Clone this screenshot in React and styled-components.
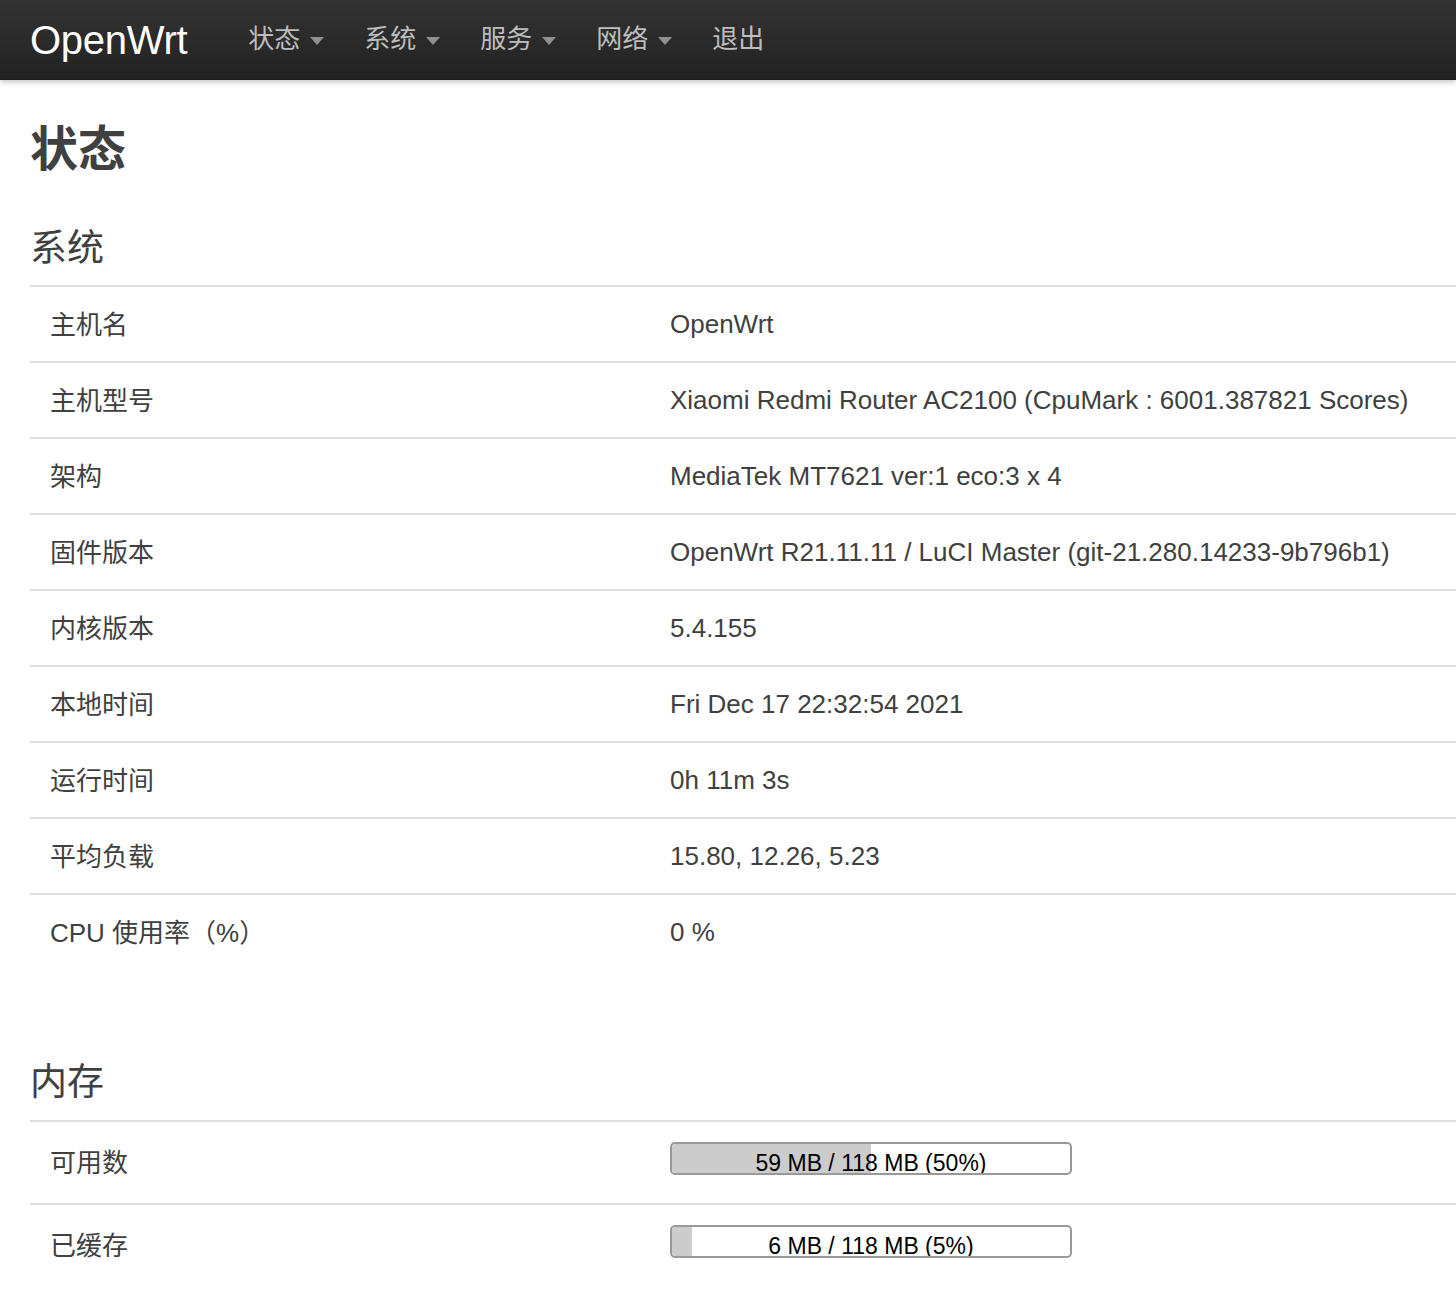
import styled, { createGlobalStyle } from 'styled-components';

const GlobalStyle = createGlobalStyle`
  html, body {
    margin: 0;
    padding: 0;
    background: #fff;
  }
  body {
    font-family: "Liberation Sans", "Noto Sans CJK SC", sans-serif;
    color: #404040;
  }
`;

const Navbar = styled.header`
  height: 80px;
  display: flex;
  align-items: center;
  padding: 0 30px;
  background: linear-gradient(to bottom, #333333, #222222);
  box-shadow: 0 2px 6px rgba(0, 0, 0, 0.25), inset 0 -1px 0 rgba(0, 0, 0, 0.1);
  position: relative;
  z-index: 1;
`;

const Brand = styled.a`
  font-size: 40px;
  color: #ffffff;
  text-decoration: none;
  margin-right: 41px;
  line-height: 1;
  letter-spacing: -0.3px;
`;

const NavList = styled.nav`
  display: flex;
  align-items: center;
`;

const NavItem = styled.a`
  display: flex;
  align-items: center;
  gap: 10px;
  padding: 0 20px 2px;
  font-size: 26px;
  color: #bdbdbd;
  text-decoration: none;
  line-height: 78px;
`;

const Caret = styled.span`
  display: inline-block;
  width: 0;
  height: 0;
  border-left: 7px solid transparent;
  border-right: 7px solid transparent;
  border-top: 8px solid #8f8f8f;
  margin-top: 4px;
`;

const Main = styled.main`
  padding: 41px 0 40px 30px;
`;

const PageTitle = styled.h2`
  margin: 0;
  font-size: 48px;
  line-height: 58px;
  font-weight: bold;
  color: #404040;
`;

const SectionTitle = styled.h3`
  margin: ${(p) => (p.$first ? '48px 0 14px' : '92px 0 15px')};
  font-size: 37px;
  line-height: 44px;
  font-weight: normal;
  color: #404040;
`;

const Table = styled.div`
  display: flex;
  flex-direction: column;
`;

const Row = styled.div`
  display: grid;
  grid-template-columns: 620px 1fr;
  align-items: center;
  height: ${(p) => p.$height || 76}px;
  border-top: 2px solid #dddddd;
  box-sizing: border-box;
  font-size: 26px;
`;

const Label = styled.div`
  padding: 0 20px 4px;
`;

const Value = styled.div`
  padding: 0 20px;
  white-space: nowrap;
`;

const Bar = styled.div`
  position: relative;
  width: 402px;
  height: 33px;
  box-sizing: border-box;
  border: 2px solid #999999;
  border-radius: 5px;
  background: #fff;
  overflow: hidden;
  margin-top: -8px;
`;

const BarFill = styled.div`
  height: 100%;
  background: #cccccc;
`;

const BarText = styled.span`
  position: absolute;
  inset: 0;
  display: flex;
  justify-content: center;
  align-items: flex-start;
  font-size: 23px;
  line-height: 23px;
  color: #000;
  padding-top: 8px;
`;

const systemInfo = [
  ['主机名', 'OpenWrt'],
  ['主机型号', 'Xiaomi Redmi Router AC2100 (CpuMark : 6001.387821 Scores)'],
  ['架构', 'MediaTek MT7621 ver:1 eco:3 x 4'],
  ['固件版本', 'OpenWrt R21.11.11 / LuCI Master (git-21.280.14233-9b796b1)'],
  ['内核版本', '5.4.155'],
  ['本地时间', 'Fri Dec 17 22:32:54 2021'],
  ['运行时间', '0h 11m 3s'],
  ['平均负载', '15.80, 12.26, 5.23'],
  ['CPU 使用率（%）', '0 %'],
];

const memory = [
  { label: '可用数', used: 59, total: 118, pct: 50 },
  { label: '已缓存', used: 6, total: 118, pct: 5 },
];

const menu = [
  { name: '状态', dropdown: true },
  { name: '系统', dropdown: true },
  { name: '服务', dropdown: true },
  { name: '网络', dropdown: true },
  { name: '退出' },
];

function Progress({ used, total, pct }) {
  return (
    <Bar>
      <BarFill style={{ width: `${pct}%` }} />
      <BarText>
        {used} MB / {total} MB ({pct}%)
      </BarText>
    </Bar>
  );
}

export default function App() {
  return (
    <>
      <GlobalStyle />
      <Navbar>
        <Brand href="#">OpenWrt</Brand>
        <NavList>
          {menu.map((item) => (
            <NavItem href="#" key={item.name}>
              {item.name}
              {item.dropdown && <Caret />}
            </NavItem>
          ))}
        </NavList>
      </Navbar>
      <Main>
        <PageTitle>状态</PageTitle>

        {/* System info */}
        <SectionTitle $first>系统</SectionTitle>
        <Table>
          {systemInfo.map(([label, value]) => (
            <Row key={label}>
              <Label>{label}</Label>
              <Value>{value}</Value>
            </Row>
          ))}
        </Table>

        {/* Memory usage */}
        <SectionTitle>内存</SectionTitle>
        <Table>
          {memory.map((m) => (
            <Row key={m.label} $height={83}>
              <Label>{m.label}</Label>
              <Value>
                <Progress used={m.used} total={m.total} pct={m.pct} />
              </Value>
            </Row>
          ))}
        </Table>
      </Main>
    </>
  );
}
